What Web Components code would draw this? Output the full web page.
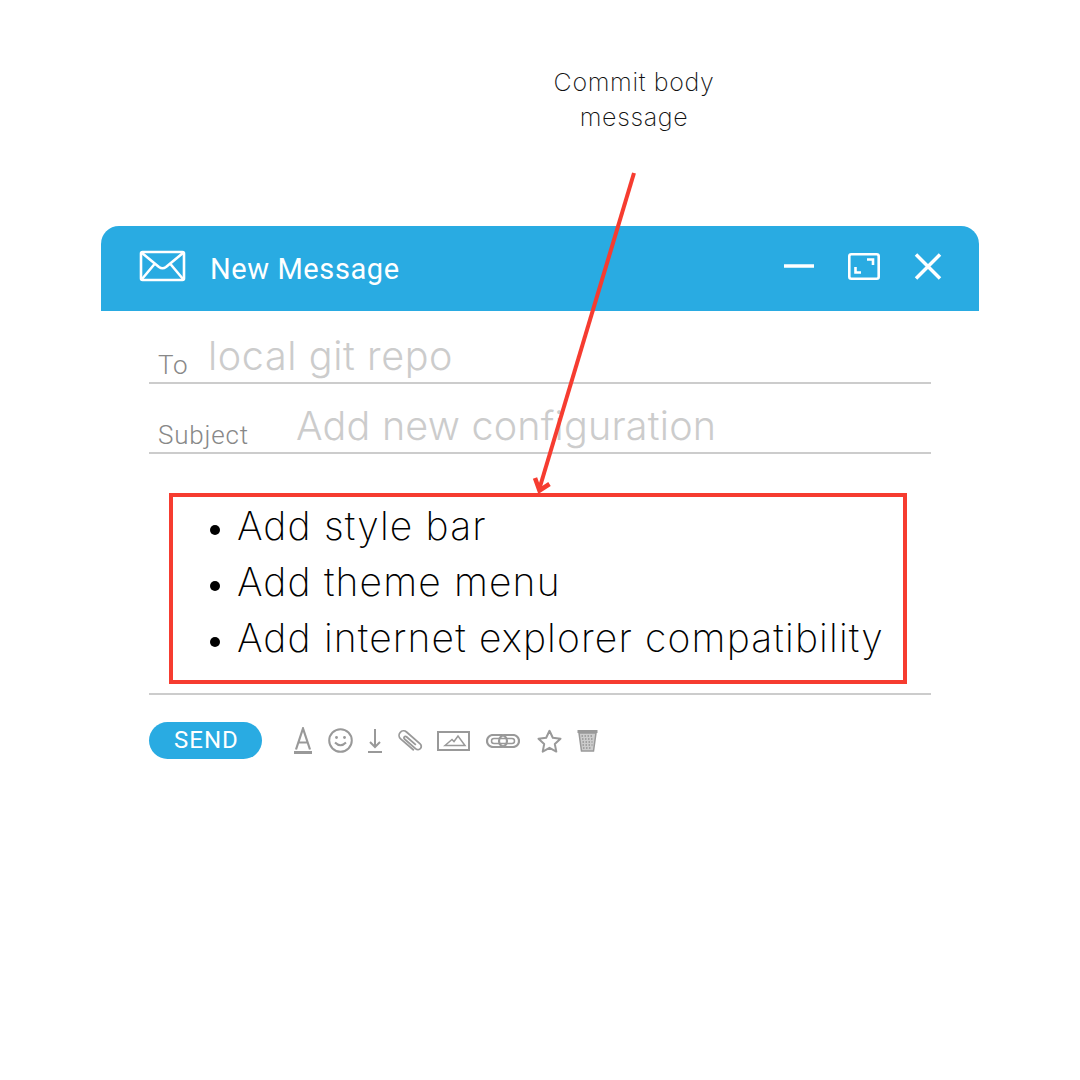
<!DOCTYPE html>
<html>
<head>
<meta charset="utf-8">
<title>New Message</title>
<style>
  html, body { margin: 0; background: #fff; }
</style>
</head>
<body>
<x-page>
  <x-note>Commit body<br>message</x-note>
  <x-window>
    <x-titlebar slot="bar">New Message</x-titlebar>
    <x-field label="To" indent="50" track=".6" text="local git repo"></x-field>
    <x-field label="Subject" indent="138" track=".2" text="Add new configuration"></x-field>
    <x-body-box>
      <li>Add style bar</li>
      <li>Add theme menu</li>
      <li>Add internet explorer compatibility</li>
    </x-body-box>
    <x-toolbar>
      <x-send>SEND</x-send>
    </x-toolbar>
  </x-window>
  <x-arrow></x-arrow>
</x-page>

<script>
/** Page frame, the arrow sits on top of it */
class XPage extends HTMLElement {
  constructor() {
    super();
    this.attachShadow({mode: 'open'}).innerHTML = `<style>
        :host { display: block; position: relative; width: 1080px; height: 1080px; overflow: hidden; }
      </style><slot></slot>`;
  }
}

/** The note above the window */
class XNote extends HTMLElement {
  constructor() {
    super();
    this.attachShadow({mode: 'open'}).innerHTML = `<style>
        :host {
          display: block;
          box-sizing: border-box;
          height: 226px;
          padding: 65px 0 0 188px;
          text-align: center;
          font: 200 25px/35px Inter, sans-serif;
          letter-spacing: .65px;
          color: #111;
        }
      </style><slot></slot>`;
  }
}

/** Compose window: a title bar on top, the form below */
class XWindow extends HTMLElement {
  constructor() {
    super();
    this.attachShadow({mode: 'open'}).innerHTML = `<style>
        :host { display: block; margin: 0 101px; }
        .form { padding: 0 48px; }
      </style>
      <slot name="bar"></slot>
      <div class="form"><slot></slot></div>`;
  }
}

class XTitlebar extends HTMLElement {
  constructor() {
    super();
    this.attachShadow({mode: 'open'}).innerHTML = `<style>
        :host {
          display: flex;
          align-items: center;
          box-sizing: border-box;
          height: 85px;
          padding: 0 37px 5px 38px;
          background: #29abe2;
          border-radius: 18px 18px 0 0;
          color: #fff;
        }
        svg { display: block; fill: none; stroke: #fff; }
        .title {
          flex: 1;
          margin: 6px 0 0 24px;
          font: 400 29px/34px Roboto, sans-serif;
          letter-spacing: .6px;
        }
        .controls { display: flex; align-items: center; gap: 34px; }
      </style>
      <svg width="47" height="32" viewBox="0 0 47 32" stroke-width="2.600" stroke-linejoin="round">
        <rect x="2" y="2" width="43" height="28" rx="1.500"/>
        <path d="M3 3l17 14q3.500 2.500 7 0L44 3M3 29l13-15.500M44 29L31 13.500"/>
      </svg>
      <div class="title"><slot></slot></div>
      <div class="controls">
        <svg width="30" height="4" viewBox="0 0 30 4" stroke-width="3.500"><path d="M0 2h30"/></svg>
        <svg width="32" height="27" viewBox="0 0 32 27" stroke-width="2.600">
          <rect x="1.300" y="1.300" width="29.400" height="24.400" rx="2"/>
          <path d="M7.500 14v5.500H13M19 6.500h6V12"/>
        </svg>
        <svg width="28" height="27" viewBox="0 0 28 27" stroke-width="3.500"><path d="M2 1.500l24 24M26 1.500l-24 24"/></svg>
      </div>`;
  }
}

/** One labelled line of the form */
class XField extends HTMLElement {
  constructor() {
    super();
    const root = this.attachShadow({mode: 'open'});
    root.innerHTML = `<style>
        :host {
          display: flex;
          align-items: flex-end;
          box-sizing: border-box;
          height: 70px;
          padding: 0 0 0 9px;
          border-bottom: 2px solid #ccc;
        }
        :host(:first-of-type) { height: 73px; }
        label { flex: none; font: 300 26px/34px Roboto, sans-serif; letter-spacing: .8px; color: #888; }
        span { margin-bottom: -2px; font: 300 39.500px/56px Inter, sans-serif; color: #ccc; }
      </style><label></label><span></span>`;
    const label = root.querySelector('label');
    label.textContent = this.getAttribute('label');
    label.style.width = this.getAttribute('indent') + 'px';
    const value = root.querySelector('span');
    value.textContent = this.getAttribute('text');
    value.style.letterSpacing = this.getAttribute('track') + 'px';
  }
}

/** The outlined commit body */
class XBodyBox extends HTMLElement {
  constructor() {
    super();
    this.attachShadow({mode: 'open'}).innerHTML = `<style>
        :host { display: block; padding: 39px 0 9px; border-bottom: 2px solid #ccc; }
        .box {
          box-sizing: border-box;
          height: 191px;
          margin: 0 24px 0 20px;
          padding: 1px 0 0 64px;
          border: 4px solid #f63c30;
          font: 200 39px/56px Inter, sans-serif;
          letter-spacing: 1.15px;
          color: #000;
        }
        ::slotted(li) { list-style: none; position: relative; }
        ::slotted(li)::before {
          content: "";
          position: absolute;
          left: -27px;
          top: 27px;
          width: 10px;
          height: 10px;
          border-radius: 50%;
          background: #000;
        }
      </style><div class="box"><slot></slot></div>`;
  }
}

class XSend extends HTMLElement {
  constructor() {
    super();
    this.attachShadow({mode: 'open'}).innerHTML = `<style>
        :host {
          display: flex;
          align-items: center;
          justify-content: center;
          box-sizing: border-box;
          width: 113px;
          height: 37px;
          padding-left: 2px;
          border-radius: 19px;
          background: #29abe2;
          color: #fff;
          font: 400 24px/37px Roboto, sans-serif;
          letter-spacing: 1px;
        }
      </style><slot></slot>`;
  }
}

/** Send button and the row of gray tools */
class XToolbar extends HTMLElement {
  constructor() {
    super();
    this.attachShadow({mode: 'open'}).innerHTML = `<style>
        :host { display: flex; align-items: center; height: 37px; margin-top: 27px; }
        .tools { display: flex; align-items: center; margin-left: 32px; }
        svg { display: block; flex: none; fill: none; stroke: #999; stroke-width: 2; }
      </style>
      <slot></slot>
      <div class="tools">
        <svg width="18" height="28" viewBox="0 0 18 28">
          <path stroke-width="2.200" d="M2 22.500L9 1.500l7 21M4.500 15.500h9"/>
          <path stroke-width="3" d="M0 25.500h18"/>
        </svg>
        <svg style="margin-left:16px" width="25" height="25" viewBox="0 0 25 25">
          <circle cx="12.500" cy="12.500" r="11.300"/>
          <path d="M7 14.500q5.500 5.500 11 0"/>
          <circle cx="8.500" cy="9.500" r="1.400" fill="#999" stroke="none"/>
          <circle cx="16.500" cy="9.500" r="1.400" fill="#999" stroke="none"/>
        </svg>
        <svg style="margin-left:15px" width="14" height="25" viewBox="0 0 14 25">
          <path d="M7 1v18M2 14l5 5 5-5M0 24h14"/>
        </svg>
        <svg style="margin-left:15px" width="26" height="24" viewBox="0 0 26 24">
          <path stroke-width="1.800" transform="translate(13 12) rotate(41) translate(-14 -5.500)" d="M23 10H5.500a4.500 4.500 0 0 1 0-9h18a3.300 3.300 0 0 1 0 6.600H8.500a1.500 1.500 0 0 1 0-3H21"/>
        </svg>
        <svg style="margin-left:14px" width="33" height="20" viewBox="0 0 33 20">
          <rect x="1" y="1" width="31" height="18"/>
          <path stroke-width="1.500" d="M8 14.500l7-6 2 2 4-5.500 7 9.500z"/>
        </svg>
        <svg style="margin-left:16px" width="34" height="14" viewBox="0 0 34 14">
          <rect stroke-width="2.200" x="1" y="1" width="20" height="12" rx="6"/>
          <rect stroke-width="2.200" x="13" y="1" width="20" height="12" rx="6"/>
          <path stroke-width="1.500" d="M21 4.500H8a2.500 2.500 0 0 0 0 5h6M13 9.500h13a2.500 2.500 0 0 0 0-5h-6"/>
        </svg>
        <svg style="margin-left:17px" width="25" height="24" viewBox="0 0 25 24">
          <path stroke-linejoin="round" d="M12.500 1.800l3.300 7 7.700.9-5.700 5.300 1.500 7.600-6.800-3.800-6.800 3.800 1.500-7.600L1.500 9.700l7.700-.9z"/>
        </svg>
        <svg style="margin-left:15px" width="21" height="23" viewBox="0 0 21 23">
          <path fill="#999" stroke="none" d="M.5 1h20v3H.5z"/>
          <path fill="#ccc" stroke="#999" stroke-width="1.500" d="M2 4l2.500 18h12L19 4z"/>
          <path stroke="#777" stroke-width="1" stroke-dasharray="1.500 1.500" d="M4.500 7h12M5 10h11M5.500 13h10M5.500 16h10M6 19h9"/>
        </svg>
      </div>`;
  }
}

/** Red arrow from the note down to the box */
class XArrow extends HTMLElement {
  constructor() {
    super();
    this.attachShadow({mode: 'open'}).innerHTML = `<style>
        :host { position: absolute; left: 0; top: 0; width: 1080px; height: 1080px; pointer-events: none; }
        svg { display: block; fill: none; stroke: #f63c30; }
      </style>
      <svg width="1080" height="1080" viewBox="0 0 1080 1080">
        <path stroke-width="4" d="M634 173L539 490"/>
        <path stroke-width="4.500" d="M535 478L539.500 490.500L549.500 484"/>
      </svg>`;
  }
}

customElements.define('x-page', XPage);
customElements.define('x-note', XNote);
customElements.define('x-window', XWindow);
customElements.define('x-titlebar', XTitlebar);
customElements.define('x-field', XField);
customElements.define('x-body-box', XBodyBox);
customElements.define('x-send', XSend);
customElements.define('x-toolbar', XToolbar);
customElements.define('x-arrow', XArrow);
</script>
</body>
</html>
